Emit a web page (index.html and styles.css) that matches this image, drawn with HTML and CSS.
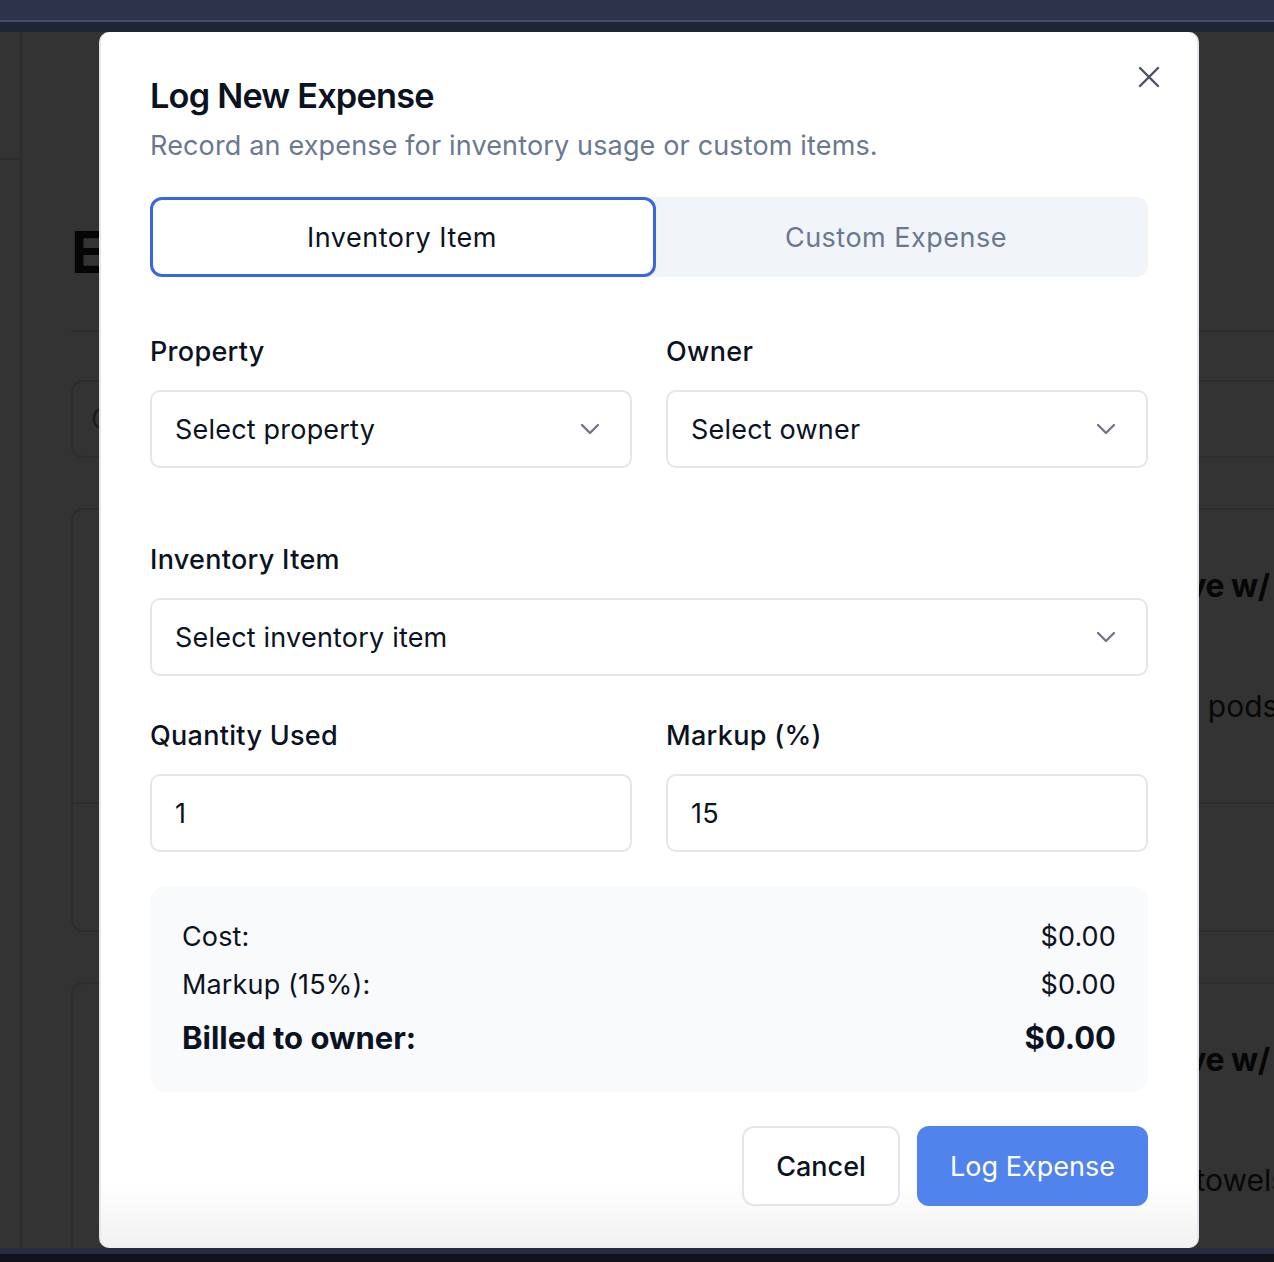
FILE: index.html
```html
<!DOCTYPE html>
<html lang="en">
<head>
<meta charset="utf-8">
<title>Log New Expense</title>
<link rel="stylesheet" href="styles.css">
</head>
<body>
<div class="topbar"></div>
<div class="topline"></div>
<div class="topband"></div>
<div class="stage">
  <div class="page">
    <aside class="sidebar"><div class="sidebar-head"></div></aside>
    <main class="main">
      <h1 class="page-title">Expenses</h1>
      <div class="rule"></div>
      <div class="search">C</div>
      <div class="card card-one">
        <div class="card-top">
          <div class="item-title">Nitrile Glove w/ grip</div>
          <div class="item-meta">Stock usage · 1 case</div>
          <div class="item-sub">Detergent pods</div>
        </div>
        <div class="card-bottom"></div>
      </div>
      <div class="card card-two">
        <div class="card-top">
          <div class="item-title">Nitrile Glove w/ grip</div>
          <div class="item-meta">Stock usage · 1 case</div>
          <div class="item-sub">Bath towels</div>
        </div>
      </div>
    </main>
  </div>

  <div class="modal" role="dialog" aria-labelledby="m-title">
    <button class="close" aria-label="Close">
      <svg width="22" height="22" viewBox="0 0 22 22"><path d="M2 2 L20 20 M20 2 L2 20" stroke="#4b5260" stroke-width="2.4" stroke-linecap="round" fill="none"/></svg>
    </button>
    <h2 class="m-title" id="m-title">Log New Expense</h2>
    <p class="m-sub">Record an expense for inventory usage or custom items.</p>

    <div class="tabs">
      <div class="tab active">Inventory Item</div>
      <div class="tab">Custom Expense</div>
    </div>

    <div class="row row-first">
      <div class="field">
        <label class="label">Property</label>
        <div class="select"><span>Select property</span>
          <svg class="chev" width="20" height="12" viewBox="0 0 20 12"><path d="M2 2 L10 10 L18 2" stroke="#6b7280" stroke-width="2.2" fill="none" stroke-linecap="round" stroke-linejoin="round"/></svg>
        </div>
      </div>
      <div class="field">
        <label class="label">Owner</label>
        <div class="select"><span>Select owner</span>
          <svg class="chev" width="20" height="12" viewBox="0 0 20 12"><path d="M2 2 L10 10 L18 2" stroke="#6b7280" stroke-width="2.2" fill="none" stroke-linecap="round" stroke-linejoin="round"/></svg>
        </div>
      </div>
    </div>

    <div class="field field-inv">
      <label class="label">Inventory Item</label>
      <div class="select"><span>Select inventory item</span>
        <svg class="chev" width="20" height="12" viewBox="0 0 20 12"><path d="M2 2 L10 10 L18 2" stroke="#6b7280" stroke-width="2.2" fill="none" stroke-linecap="round" stroke-linejoin="round"/></svg>
      </div>
    </div>

    <div class="row row-qty">
      <div class="field">
        <label class="label">Quantity Used</label>
        <div class="input">1</div>
      </div>
      <div class="field">
        <label class="label">Markup (%)</label>
        <div class="input">15</div>
      </div>
    </div>

    <div class="summary">
      <div class="sum-row"><span>Cost:</span><span>$0.00</span></div>
      <div class="sum-row"><span>Markup (15%):</span><span>$0.00</span></div>
      <div class="sum-row total"><span>Billed to owner:</span><span>$0.00</span></div>
    </div>

    <div class="actions">
      <button class="btn btn-cancel">Cancel</button>
      <button class="btn btn-primary">Log Expense</button>
    </div>
  </div>
</div>
<div class="botband"></div>
<div class="botbar"></div>
</body>
</html>
```

FILE: styles.css
```css
* { box-sizing: border-box; }
html, body { margin: 0; padding: 0; }
body {
  width: 1274px;
  height: 1262px;
  overflow: hidden;
  background: #333333;
  font-family: Inter, "Noto Sans", "Liberation Sans", sans-serif;
}
.topbar { height: 20px; background: #2d3348; }
.topline { height: 2px; background: #474d63; }
.topband { height: 10px; background: #1f2436; }
.botband { height: 6px; background: #272c3e; }
.botbar { height: 8px; background: #10131c; }

.stage {
  position: relative;
  height: 1216px;
  overflow: hidden;
  background: #333333;
}

/* dimmed page behind the dialog */
.page { display: flex; height: 100%; }
.sidebar {
  width: 22px;
  border-right: 2px solid #2c2c2c;
  flex: none;
}
.sidebar-head { height: 128px; border-bottom: 2px solid #2c2c2c; }
.main { flex: 1; padding-left: 49px; overflow: hidden; }
.page-title {
  margin: 186px 0 0;
  font-size: 58px;
  line-height: 68px;
  font-weight: 700;
  color: #050505;
  height: 68px;
}
.rule { margin-top: 44px; height: 2px; background: #2c2c2c; }
.search {
  margin-top: 48px;
  height: 78px;
  border: 2px solid #2d2d2d;
  border-right: none;
  border-radius: 12px 0 0 12px;
  font-size: 28px;
  line-height: 74px;
  padding-left: 18px;
  color: #1c1c1c;
}
.card {
  margin-top: 50px;
  border: 2px solid #2d2d2d;
  border-right: none;
  border-radius: 12px 0 0 12px;
}
.card-one { height: 424px; }
.card-top {
  height: 294px;
  border-bottom: 2px solid #2d2d2d;
  padding: 54px 0 0 1010px;
  white-space: nowrap;
}
.card-two { height: 300px; border-bottom: none; }
.card-two .card-top { border-bottom: none; padding-top: 54px; }
.item-title { font-size: 32px; font-weight: 700; color: #060606; line-height: 44px; margin-left: -44px; letter-spacing: -0.5px; }
.item-meta { font-size: 20px; color: #262626; line-height: 28px; margin-top: 23px; margin-left: -80px; }
.item-sub { font-size: 30px; color: #080808; line-height: 40px; margin-top: 27px; margin-left: -24px; }
.card-two .item-sub { margin-left: 40px; }

/* dialog */
.modal {
  position: absolute;
  left: 99px;
  top: 0;
  width: 1100px;
  height: 1216px;
  background: linear-gradient(to bottom, #ffffff 0, #ffffff 1150px, #f1f1f1 1216px);
  border-left: 2px solid #e3e6ec;
  border-right: 2px solid #e3e6ec;
  border-radius: 10px;
  padding: 42px 49px 0 49px;
  color: #0b1222;
}
.close {
  position: absolute;
  right: 35px;
  top: 32px;
  width: 26px;
  height: 26px;
  padding: 2px;
  border: none;
  background: transparent;
  display: flex;
  align-items: center;
  justify-content: center;
}
.m-title {
  margin: 0;
  font-size: 34.3px;
  line-height: 44px;
  font-weight: 600;
  letter-spacing: -0.8px;
  color: #0b1222;
}
.m-sub {
  margin: 10px 0 0;
  font-size: 27px;
  line-height: 36px;
  letter-spacing: 0.15px;
  color: #6b7890;
}
.tabs {
  margin-top: 33px;
  height: 80px;
  background: #f1f5f9;
  border-radius: 12px;
  display: grid;
  grid-template-columns: 506px 1fr;
}
.tab {
  display: flex;
  align-items: center;
  justify-content: center;
  font-size: 27px;
  letter-spacing: 0.5px;
  color: #6b7890;
  border-radius: 12px;
  padding-right: 12px;
}
.tab.active {
  background: #ffffff;
  border: 3px solid #3c66e0;
  color: #0b1222;
  padding-right: 2px;
}
.row {
  display: grid;
  grid-template-columns: 1fr 1fr;
  column-gap: 34px;
}
.row-first { margin-top: 57px; }
.field-inv { margin-top: 74px; }
.row-qty { margin-top: 42px; }
.field { display: flex; flex-direction: column; }
.label {
  font-size: 27px;
  line-height: 36px;
  letter-spacing: 0.3px;
  font-weight: 500;
  color: #0b1222;
  margin-bottom: 20px;
}
.select, .input {
  height: 78px;
  border: 2px solid #e2e7ee;
  border-radius: 10px;
  display: flex;
  align-items: center;
  justify-content: space-between;
  padding: 0 30px 0 23px;
  font-size: 27px;
  letter-spacing: 0.2px;
  color: #0b1222;
  background: #fff;
}
.chev { flex: none; }
.summary {
  margin-top: 34px;
  background: #f8fafc;
  border-radius: 16px;
  padding: 33px 32px 36px;
}
.sum-row {
  display: flex;
  justify-content: space-between;
  font-size: 27px;
  letter-spacing: 0.15px;
  line-height: 36px;
  color: #0b1222;
}
.sum-row + .sum-row { margin-top: 12px; }
.sum-row.total {
  font-size: 31px;
  letter-spacing: 0;
  font-weight: 700;
  margin-top: 17px;
}
.actions {
  margin-top: 34px;
  display: flex;
  justify-content: flex-end;
  gap: 17px;
}
.btn {
  height: 80px;
  border-radius: 12px;
  font-family: inherit;
  font-size: 27px;
  padding: 0;
}
.btn-cancel {
  width: 158px;
  background: #ffffff;
  border: 2px solid #e2e7ee;
  color: #0b1222;
  font-weight: 500;
}
.btn-primary {
  width: 231px;
  background: #5084ec;
  border: none;
  color: #ffffff;
}
```
